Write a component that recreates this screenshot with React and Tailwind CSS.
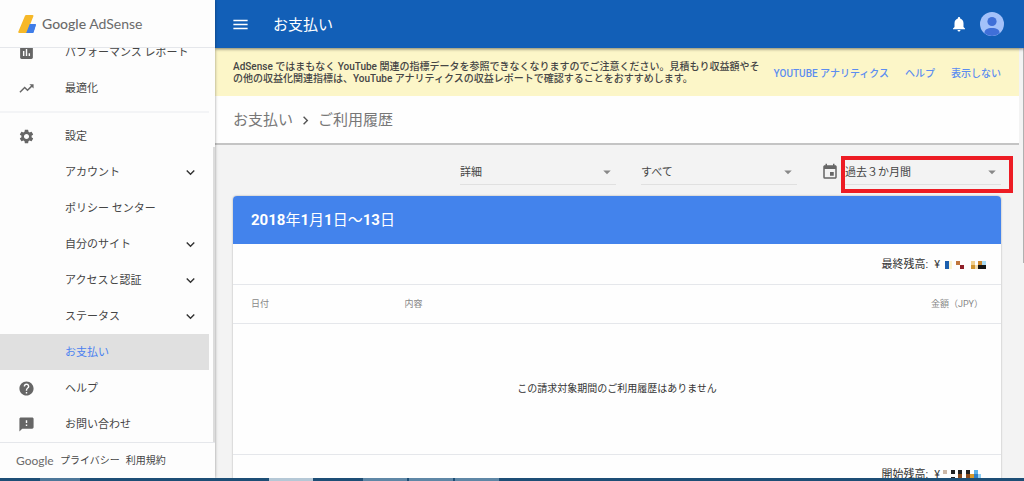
import React from "react";
import {
  MdAssessment,
  MdTrendingUp,
  MdSettings,
  MdHelp,
  MdFeedback,
  MdExpandMore,
  MdChevronRight,
  MdMenu,
  MdNotifications,
  MdEvent,
  MdArrowDropDown,
} from "react-icons/md";

const navItems = [
  { label: "パフォーマンス レポート", icon: MdAssessment },
  { label: "最適化", icon: MdTrendingUp },
  { divider: true, label: "divider" },
  { label: "設定", icon: MdSettings },
  { label: "アカウント", expandable: true },
  { label: "ポリシー センター" },
  { label: "自分のサイト", expandable: true },
  { label: "アクセスと認証", expandable: true },
  { label: "ステータス", expandable: true },
  { label: "お支払い", active: true },
  { label: "ヘルプ", icon: MdHelp },
  { label: "お問い合わせ", icon: MdFeedback },
];

function Logo() {
  return (
    <div className="flex h-12 shrink-0 items-center gap-1.5 border-b border-gray-200 pl-[18px]">
      <svg width="18" height="18" viewBox="0 0 18 18" aria-hidden="true">
        <path d="M10.500 9h6.200a1 1 0 0 1 .9 1.300l-2.400 7.700H8z" fill="#3f7de8" />
        <path d="M7 .8A1.300 1.300 0 0 1 8.200 0h6.200a1 1 0 0 1 .9 1.400L9 17.200a1.300 1.300 0 0 1-1.200.8H1.300a1 1 0 0 1-.9-1.400z" fill="#f6b828" />
        <path d="M11.800 9h5.200a1 1 0 0 1 .9 1.300l-2.200 6.800a1.400 1.400 0 0 1-1.300.9H8.200z" fill="#3f7de8" />
      </svg>
      <span className="font-['Lato','Liberation_Sans',sans-serif] text-[14px] text-[#6b6b6b]">
        <span className="font-medium">Google</span> AdSense
      </span>
    </div>
  );
}

function NavItem({ item }) {
  const Icon = item.icon;
  if (item.divider) {
    return <li className="my-[5px] h-0.5 shrink-0 bg-gray-100" />;
  }
  return (
    <li className="shrink-0">
      <a
        href="#"
        className={
          item.active
            ? "flex h-9 items-center bg-[#e0e0e0] pl-[18px] pr-2.5 text-[#4a80f0]"
            : "flex h-9 items-center pl-[18px] pr-2.5 text-[#454545]"
        }
      >
        <span className="w-[47px] text-[#666]">{Icon && <Icon size={17} />}</span>
        <span className="flex-1 whitespace-nowrap pt-0.5">{item.label}</span>
        {item.expandable && <MdExpandMore size={17} className="text-[#333]" />}
      </a>
    </li>
  );
}

function Sidebar() {
  return (
    <aside className="z-10 flex w-[215px] shrink-0 flex-col bg-[#fdfdfd] text-[11px] shadow-[0_0_3px_rgba(0,0,0,0.4)]">
      <Logo />
      <nav className="flex min-h-0 flex-1 items-end gap-1 overflow-hidden">
        <ul className="flex h-full flex-1 flex-col justify-end">
          {navItems.map((item) => (
            <NavItem key={item.label} item={item} />
          ))}
        </ul>
        <div className="h-3/4 w-0.5 bg-[#dcdcdc]" />
      </nav>
      <footer className="flex h-9 shrink-0 items-center border-t border-gray-200 pl-4 text-[10px] text-[#454545]">
        <span className="w-11 font-['Lato','Liberation_Sans',sans-serif] text-[12px] text-[#6b6b6b]">
          Google
        </span>
        <a href="#" className="mr-1.5">プライバシー</a>
        <a href="#">利用規約</a>
      </footer>
    </aside>
  );
}

function Header() {
  return (
    <header className="z-[5] flex h-12 shrink-0 items-center bg-[#125fb7] pl-4 pr-5 text-white shadow-[0_1px_3px_rgba(0,0,0,0.5)]">
      <button type="button" aria-label="メニュー">
        <MdMenu size={19} />
      </button>
      <h1 className="ml-[23px] flex-1 pt-0.5 text-[15px]">お支払い</h1>
      <button type="button" aria-label="通知" className="mr-3">
        <MdNotifications size={18} />
      </button>
      <button type="button" aria-label="アカウント メニュー">
        <svg width="24" height="24" viewBox="0 0 24 24">
          <circle cx="12" cy="12" r="12" fill="#a3c1fa" />
          <circle cx="12" cy="9.500" r="4.600" fill="#3f6fd8" />
          <path d="M4.500 21.300c-.4-3.500 3-5.300 7.500-5.300s7.900 1.800 7.500 5.300A12 12 0 0 1 12 24a12 12 0 0 1-7.500-2.700z" fill="#3f6fd8" />
        </svg>
      </button>
    </header>
  );
}

function Notice() {
  return (
    <div className="flex h-12 shrink-0 items-center bg-[#fcf6c8] px-[18px] pt-0.5 text-[10px]">
      <p className="w-[528px] font-medium leading-3 text-[#454545]">
        AdSense ではまもなく YouTube 関連の指標データを参照できなくなりますのでご注意ください。見積もり収益額やその他の収益化関連指標は、YouTube アナリティクスの収益レポートで確認することをおすすめします。
      </p>
      <div className="ml-auto flex gap-4 whitespace-nowrap font-medium text-[#5c8df0]">
        <a href="#">YOUTUBE アナリティクス</a>
        <a href="#">ヘルプ</a>
        <a href="#">表示しない</a>
      </div>
    </div>
  );
}

function Filter({ label, value }) {
  return (
    <div className="relative w-[156px]">
      <select
        aria-label={label}
        className="h-6 w-full appearance-none border-b border-[#e0e0e0] bg-transparent pt-0.5 text-[11px] text-[#454545]"
      >
        <option>{value}</option>
      </select>
      <MdArrowDropDown
        size={18}
        className="pointer-events-none absolute right-0 top-1 text-[#888]"
      />
    </div>
  );
}

function Filters() {
  return (
    <div className="flex h-[51px] shrink-0 items-center justify-end pb-px pt-1">
      <Filter label="表示形式" value="詳細" />
      <div className="w-[25px]" />
      <Filter label="取引の種類" value="すべて" />
      <MdEvent size={18} className="ml-6 mr-1.5 text-[#666]" />
      <div className="relative">
        <Filter label="期間" value="過去３か月間" />
        <div className="pointer-events-none absolute -bottom-2 -left-1 -right-3 -top-[3px] border-4 border-[#ed1c24]" />
      </div>
    </div>
  );
}

// amounts are hidden behind coloured blocks
function Mosaic({ blocks }) {
  return (
    <svg width="45" height="12" viewBox="0 0 45 12" aria-hidden="true">
      {blocks.map(([x, y, w, h, fill]) => (
        <rect key={`${x}-${y}`} x={x} y={y} width={w} height={h} fill={fill} />
      ))}
    </svg>
  );
}

const closingBlocks = [
  [3, 2, 4, 8, "#1c5fae"],
  [7, 2, 3, 8, "#fbf3d0"],
  [14, 2, 4, 4, "#c0763c"],
  [18, 6, 4, 4, "#8e1f28"],
  [29, 2, 4, 4, "#f0cf8c"],
  [29, 6, 4, 4, "#cf9430"],
  [33, 6, 3, 4, "#f3dcaa"],
  [36, 2, 4, 4, "#c8862e"],
  [40, 2, 4, 4, "#a9dcf5"],
  [36, 6, 8, 4, "#151515"],
];

const openingBlocks = [
  [1, 0, 4, 4, "#cdb9a8"],
  [9, 0, 4, 4, "#222"],
  [9, 7, 4, 5, "#222"],
  [16, 0, 4, 4, "#222"],
  [16, 4, 4, 4, "#8a4a1c"],
  [16, 8, 4, 4, "#3f70b8"],
  [24, 0, 4, 4, "#222"],
  [24, 4, 4, 4, "#8a4a1c"],
  [24, 8, 4, 4, "#222"],
  [28, 4, 4, 4, "#d99a2b"],
  [32, 0, 4, 4, "#5cb1e8"],
  [32, 4, 4, 4, "#2f80c8"],
  [36, 4, 3, 4, "#8fd0f5"],
  [32, 8, 4, 4, "#5cb1e8"],
];

function Balance({ label, blocks }) {
  return (
    <div className="flex h-[41px] shrink-0 items-center justify-end border-b border-gray-200 pr-3.5 pt-0.5 text-[11px] text-[#333]">
      <span>{label}:</span>
      <span className="ml-1.5 mr-0.5">¥</span>
      <Mosaic blocks={blocks} />
    </div>
  );
}

function History() {
  return (
    <section className="shrink-0 rounded-t-sm bg-[#fefefe] shadow-[0_0_2px_rgba(0,0,0,0.35)]">
      <h2 className="flex h-12 items-center rounded-t-sm bg-[#4383ec] pl-[18px] text-[15px] font-bold text-white">
        <span>
          2018<span className="font-normal">年</span>1<span className="font-normal">月</span>1
          <span className="font-normal">日～</span>13<span className="font-normal">日</span>
        </span>
      </h2>
      <Balance label="最終残高" blocks={closingBlocks} />
      <table className="w-full table-fixed text-left">
        <thead>
          <tr className="h-[38px] border-b border-gray-200 text-[9px] text-[#888]">
            <th className="w-1/5 pl-[18px] pt-0.5 font-normal">日付</th>
            <th className="pl-[18px] pt-0.5 font-normal">内容</th>
            <th className="w-1/5 pr-[18px] pt-0.5 text-right font-normal">金額（JPY）</th>
          </tr>
        </thead>
        <tbody>
          <tr className="h-[131px] border-b border-gray-200 text-[10px] text-[#333]">
            <td colSpan={3} className="text-center">
              この請求対象期間のご利用履歴はありません
            </td>
          </tr>
        </tbody>
      </table>
      <Balance label="開始残高" blocks={openingBlocks} />
    </section>
  );
}

function Taskbar() {
  return (
    <div className="z-20 flex h-[3px] shrink-0 gap-0.5 bg-[#1d4e76] pl-10">
      <div className="w-10 bg-[#4d7799]" />
      <div className="ml-[187px] w-11 bg-[#b5c8d6]" />
      <div className="ml-12 w-11 bg-[#5f87a6]" />
      <div className="w-11 bg-[#5f87a6]" />
      <div className="w-11 bg-[#5f87a6]" />
    </div>
  );
}

function App() {
  return (
    <div className="flex h-screen flex-col overflow-hidden bg-[#f3f3f3] font-['Roboto','Noto_Sans_CJK_JP',sans-serif]">
      <div className="flex min-h-0 flex-1">
        <Sidebar />
        <div className="flex min-w-0 flex-1 flex-col">
          <Header />
          <div className="flex min-h-0 flex-1">
            <main className="flex min-w-0 flex-1 flex-col overflow-hidden">
              <Notice />
              <div className="flex h-[49px] shrink-0 items-center gap-1 border-b-2 border-[#c4c4c4] bg-[#fefefe] pl-[18px] pt-0.5 text-[15px] text-[#777]">
                <a href="#">お支払い</a>
                <MdChevronRight size={17} className="text-[#555]" />
                <span>ご利用履歴</span>
              </div>
              <div className="flex flex-col px-[18px]">
                <Filters />
                <History />
              </div>
            </main>
            <div className="flex w-[5px] justify-end">
              <div className="h-1/2 w-px bg-[#b0b0b0]" />
            </div>
          </div>
        </div>
      </div>
      <Taskbar />
    </div>
  );
}

export default App;
